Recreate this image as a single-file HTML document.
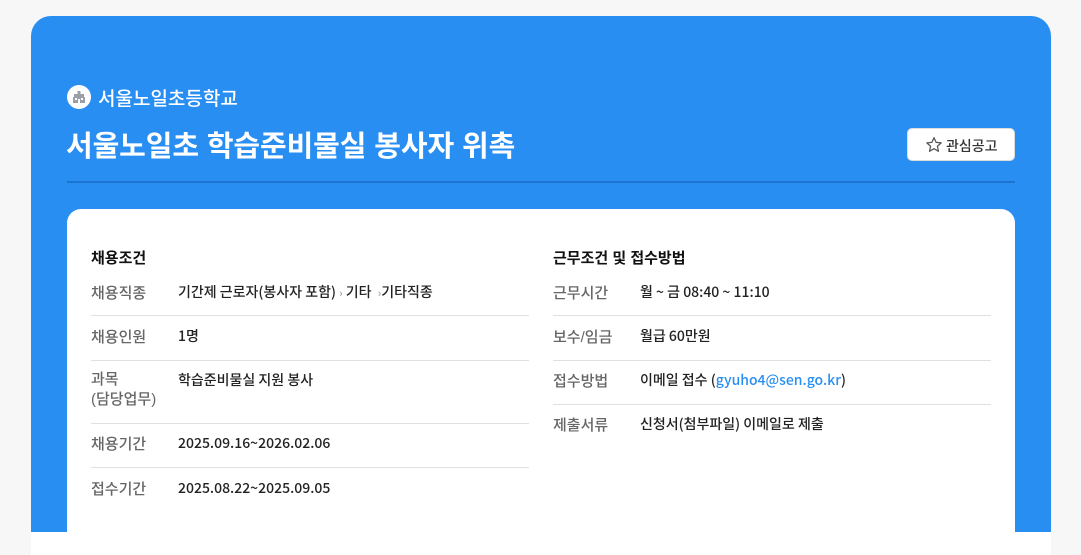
<!DOCTYPE html>
<html><head><meta charset="utf-8"><style>
*{margin:0;padding:0;box-sizing:border-box}
html,body{width:1081px;height:555px;overflow:hidden}
body{background:#f7f7f7;font-family:"Liberation Sans","Noto Sans CJK KR",sans-serif;position:relative}
.blue{position:absolute;left:31px;top:16px;width:1020px;height:516px;background:#288ef2;border-radius:20px 20px 0 0}
.white{position:absolute;left:31px;top:532px;width:1020px;height:23px;background:#fff}
.card{position:absolute;left:67px;top:209px;width:948px;height:346px;background:#fff;border-radius:14px 14px 0 0}
.abs{position:absolute;white-space:nowrap}
.school{left:98px;top:84px;font-size:19px;color:#fff;font-weight:500}
.icon{left:67px;top:85px;width:24px;height:24px;border-radius:50%;background:#fff}
.title{left:66px;top:123px;font-size:29px;font-weight:bold;color:#fff;letter-spacing:-0.1px}
.hr{left:67px;top:181px;width:948px;height:2px;background:#1b74cf}
.btn{left:907px;top:128px;width:108px;height:33px;background:#fff;border-radius:5px;border:1px solid #ddd;font-size:14px;color:#333;font-weight:500}
.h{font-size:15px;font-weight:bold;color:#111}
.lb{font-size:15px;color:#666;font-weight:500}
.v{font-size:14px;color:#222;font-weight:500;font-family:"Noto Sans CJK KR","Liberation Sans",sans-serif;line-height:18px}
.d{height:1px;background:#e0e0e0;width:438px}
</style></head><body>
<div class="blue"></div><div class="white"></div>
<div class="abs icon"><svg width="24" height="24" viewBox="0 0 24 24"><g fill="#9aa0a8"><rect x="10.5" y="6" width="3" height="3"/><rect x="7" y="9" width="10" height="3"/><rect x="6" y="12" width="12" height="6"/></g><g fill="#fff"><rect x="8" y="13" width="2" height="2"/><rect x="14" y="13" width="2" height="2"/><rect x="11" y="14" width="2" height="4"/></g></svg></div>
<div class="abs school">서울노일초등학교</div>
<div class="abs title">서울노일초 학습준비물실 봉사자 위촉</div>
<div class="abs btn"><svg style="position:absolute;left:17px;top:7px" width="18" height="18" viewBox="0 0 16 16"><path d="M8 1.5l1.9 4.2 4.5.4-3.4 3 1 4.5L8 11.3 4 13.6l1-4.5-3.4-3 4.5-.4z" fill="none" stroke="#555" stroke-width="1.1" stroke-linejoin="round"/></svg><span style="position:absolute;left:38px;top:7px">관심공고</span></div>
<div class="abs hr"></div>
<div class="card"></div>

<div class="abs h" style="left:91px;top:247px">채용조건</div>
<div class="abs lb" style="left:91px;top:282px">채용직종</div>
<div class="abs v" style="left:178px;top:283px">기간제 근로자(봉사자 포함) <span style="color:#999;font-size:11px">›</span> 기타 &nbsp;<span style="color:#999;font-size:11px">›</span>기타직종</div>
<div class="abs d" style="left:91px;top:315px"></div>
<div class="abs lb" style="left:91px;top:326px">채용인원</div>
<div class="abs v" style="left:178px;top:327px">1명</div>
<div class="abs d" style="left:91px;top:360px"></div>
<div class="abs lb" style="left:91px;top:370px;line-height:20px">과목<br>(담당업무)</div>
<div class="abs v" style="left:178px;top:371px">학습준비물실 지원 봉사</div>
<div class="abs d" style="left:91px;top:423px"></div>
<div class="abs lb" style="left:91px;top:433px">채용기간</div>
<div class="abs v" style="left:178px;top:434px">2025.09.16~2026.02.06</div>
<div class="abs d" style="left:91px;top:467px"></div>
<div class="abs lb" style="left:91px;top:478px">접수기간</div>
<div class="abs v" style="left:178px;top:479px">2025.08.22~2025.09.05</div>

<div class="abs h" style="left:553px;top:247px">근무조건 및 접수방법</div>
<div class="abs lb" style="left:553px;top:282px">근무시간</div>
<div class="abs v" style="left:640px;top:283px">월 ~ 금 08:40 ~ 11:10</div>
<div class="abs d" style="left:553px;top:315px"></div>
<div class="abs lb" style="left:553px;top:326px">보수/임금</div>
<div class="abs v" style="left:640px;top:327px">월급 60만원</div>
<div class="abs d" style="left:553px;top:360px"></div>
<div class="abs lb" style="left:553px;top:370px">접수방법</div>
<div class="abs v" style="left:640px;top:371px">이메일 접수 (<span style="color:#288ef2">gyuho4@sen.go.kr</span>)</div>
<div class="abs d" style="left:553px;top:404px"></div>
<div class="abs lb" style="left:553px;top:414px">제출서류</div>
<div class="abs v" style="left:640px;top:415px">신청서(첨부파일) 이메일로 제출</div>
</body></html>
